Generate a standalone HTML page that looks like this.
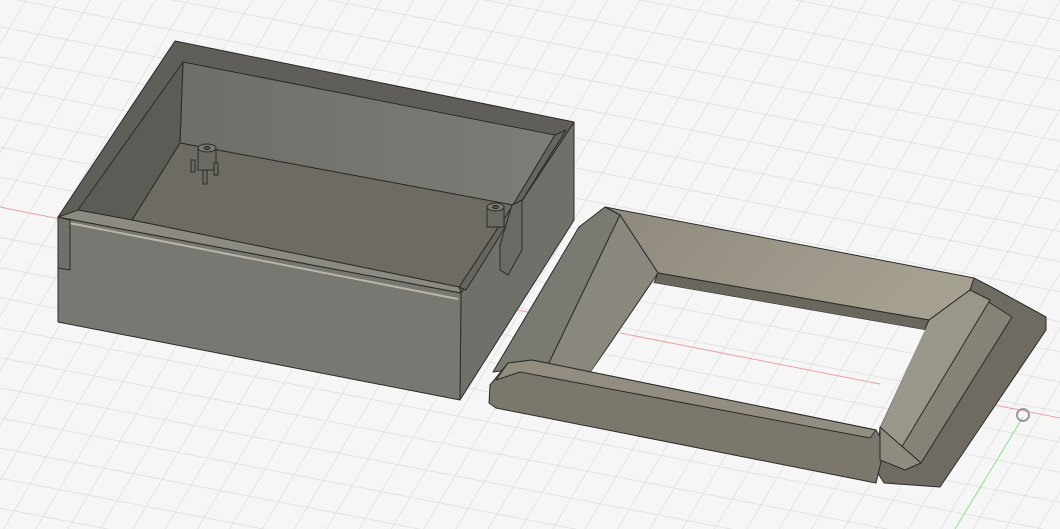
<!DOCTYPE html>
<html><head><meta charset="utf-8"><style>
html,body{margin:0;padding:0;background:#f6f6f6;}
svg{display:block}
</style></head><body>
<svg width="1060" height="529" viewBox="0 0 1060 529" xmlns="http://www.w3.org/2000/svg">
<defs>
<pattern id="g" width="100" height="100" patternUnits="userSpaceOnUse" patternTransform="matrix(0.29,0.056,-0.16,0.27,0,207)">
<rect width="100" height="100" fill="#f6f6f6"/>
<path d="M0 0H100M0 0V100" stroke="#d6d6d6" stroke-width="4" fill="none"/>
</pattern>
<linearGradient id="bw" x1="0" y1="0" x2="1" y2="0"><stop offset="0" stop-color="#6f6e68"/><stop offset="1" stop-color="#7d7c76"/></linearGradient>
<linearGradient id="tb" x1="0" y1="0" x2="1" y2="0.3"><stop offset="0" stop-color="#8e897d"/><stop offset="1" stop-color="#a6a090"/></linearGradient>
</defs>
<rect width="1060" height="529" fill="url(#g)"/>
<line x1="0" y1="207" x2="1060" y2="418" stroke="#f0a0a0" stroke-width="1"/>
<line x1="1023" y1="417" x2="955" y2="529" stroke="#8fe08f" stroke-width="1"/>

<!-- BOX -->
<g stroke="#2b2b28" stroke-width="1" stroke-linejoin="round">
<polygon points="461,293 574,122 574,220 460,400" fill="#6f706a"/>
<polygon points="58,217 461,293 460,400 58,322" fill="#777872"/>
<polygon points="175,41 574,122 461,293 58,217" fill="#5f5e58"/>
<polygon points="183,62 555,135 513,205 180,143" fill="url(#bw)"/>
<polygon points="183,62 180,143 132,220 78,210" fill="#5c5b55"/>
<polygon points="555,135 566,130 466,290 459,287 513,205" fill="#66655f"/>
<polygon points="180,143 513,205 459,287 132,220" fill="#6e6b63"/>
<polygon points="58,217 78,210 132,220 459,287 461,293" fill="#8d8a82"/>
<polyline points="64,222 458,299" fill="none" stroke="#bbb5a8" stroke-width="2"/>
<polygon points="58,217 70,220 70,270 58,268" fill="#6f706a"/>
<polygon points="512,205 522,200 522,250 508,275 500,270 500,245" fill="#6a6964"/>
<rect x="198" y="148" width="18" height="22" fill="#6a6963"/>
<ellipse cx="207" cy="148" rx="9" ry="4" fill="#7a7973"/>
<ellipse cx="207" cy="148" rx="3" ry="1.6" fill="#55544f"/>
<rect x="191" y="160" width="4" height="12" fill="#6a6963"/>
<rect x="203" y="170" width="4" height="14" fill="#6a6963"/>
<rect x="214" y="163" width="4" height="12" fill="#6a6963"/>
<rect x="487" y="207" width="17" height="20" fill="#6a6963"/>
<ellipse cx="495.5" cy="207" rx="8.5" ry="4" fill="#7a7973"/>
<ellipse cx="495.5" cy="207" rx="3" ry="1.6" fill="#55544f"/>
</g>

<!-- TRAY -->
<g stroke="#2b2b28" stroke-width="1" stroke-linejoin="round">
<polygon points="974,278 997,290 1046,317 1046,330 940,487 884,483 876,470 880,427 970,290" fill="#6f6b62"/>
<polygon points="605,207 974,278 970,290 929,320 658,273 620,215" fill="url(#tb)"/>
<polygon points="658,273 929,320 925,330 654,283" fill="#6a675f"/>
<polygon points="605,207 620,215 548,365 493,372 579,227" fill="#7b7a72"/>
<polygon points="620,215 658,273 590,373 548,365" fill="#8a887e"/>
<polygon points="970,290 1012,317 921,463 880,427 929,320" fill="#858278"/>
<polygon points="970,290 990,300 900,450 880,427 929,320" fill="#9a9689"/>
<polygon points="654,283 925,330 880,427 590,373 655,282" fill="url(#g)" stroke="none"/>
<line x1="620" y1="333" x2="880" y2="384" stroke="#f0a0a0" stroke-width="1"/>
<polygon points="508,363 532,360 876,430 885,445 876,483 496,408 489,403 490,385" fill="#7b776c"/>
<polygon points="508,363 532,360 876,430 870,438 520,372 496,380" fill="#928d80"/>
<polygon points="880,427 921,463 905,470 880,460" fill="#8f8b7f"/>
</g>
<circle cx="1023" cy="415" r="6" fill="none" stroke="#999" stroke-width="2"/>
</svg>
</body></html>
